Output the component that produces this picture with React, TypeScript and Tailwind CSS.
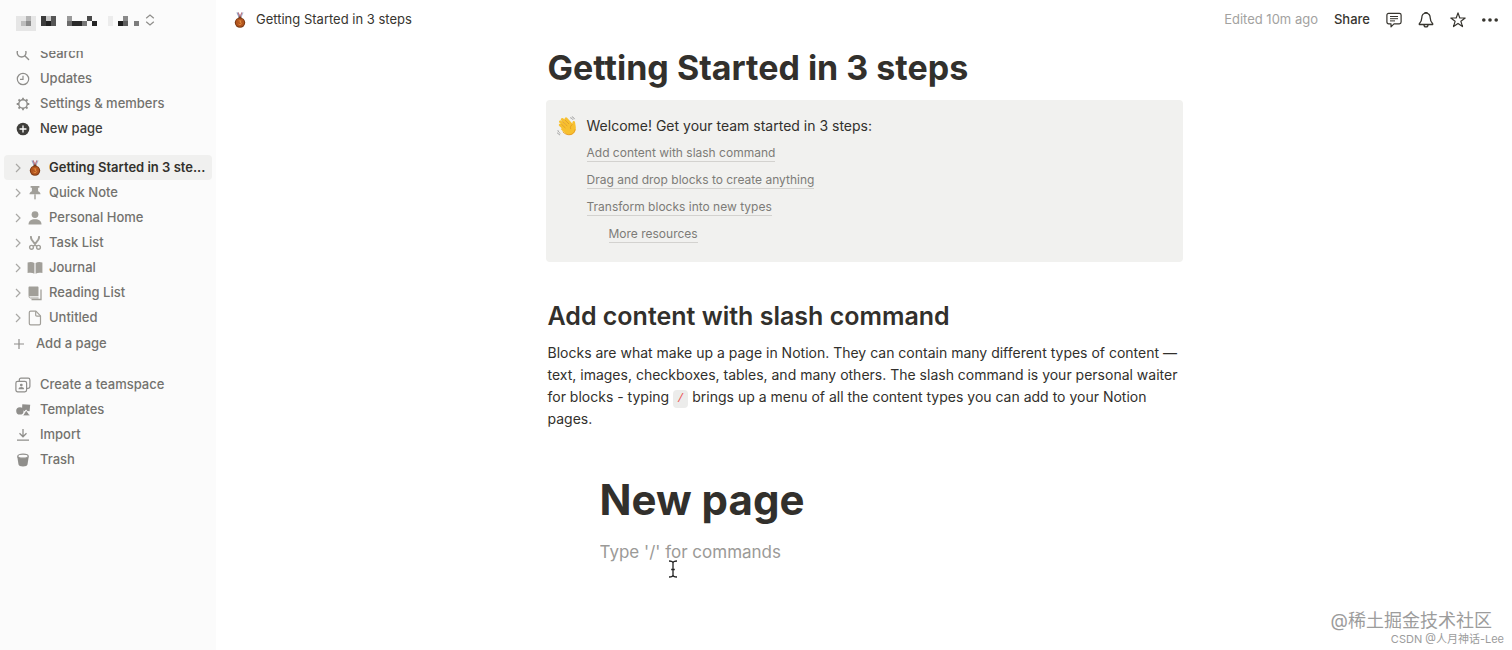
import type { ReactNode } from 'react';

interface NavRowProps {
  icon: ReactNode;
  label: string;
  strong?: boolean;
}

interface PageRowProps {
  icon: ReactNode;
  label: string;
  active?: boolean;
}

function Medal() {
  return (
    <svg className="w-4 h-4 shrink-0" viewBox="0 0 16 16" aria-hidden="true">
      <path d="M4.4 0.6h2.3l1.8 4.6-1.5 1.2z" fill="#8fa3c4" />
      <path d="M11.6 0.6H9.3L7.5 5.2l1.5 1.2z" fill="#a9b7d2" />
      <path d="M5.7 0.6h1l2 5-.9.6zM10.3 0.6h-1L7.4 5.6l.8.6z" fill="#c9707a" />
      <rect x="6.6" y="4.6" width="2.8" height="1.6" rx="0.5" fill="#6e3a1c" />
      <circle cx="8" cy="10.6" r="5.200" fill="#7d3a14" />
      <circle cx="8" cy="10.6" r="4.100" fill="#b3561f" />
      <path d="M6.6 8.9h2.6L7.9 10.2c1.9-.1 1.9 2.5 0 2.4-.6 0-1-.2-1.4-.6" fill="none" stroke="#e8913f" strokeWidth="0.9" />
    </svg>
  );
}

function WavingHand() {
  return (
    <svg className="w-5 h-5 shrink-0" viewBox="0 0 20 20" aria-hidden="true">
      <g fill="none" stroke="#f7c02f" strokeWidth="2.8" strokeLinecap="round">
        <path d="M3.2 9l5.500 5" />
        <path d="M3.400 5.800l7 6.200" />
        <path d="M5.200 3.400l7 6.200" />
        <path d="M9 2.800l5 5.500" />
      </g>
      <path d="M6.5 11l6.700-5.200 1.900 2.600c.3-1.300.2-2.600 1-3.200.9-.5 1.900.2 2 1.300.2 2.200 1.100 4.600.6 7-.5 2.700-2.400 5-5.100 5.400-2.700.4-4.900-.8-6.600-2.600L3.600 13z" fill="#f7c02f" />
      <path d="M4.600 8.500l3.600 3.300M5.600 5.700l4.400 4M7.800 3.800l4 4M15.200 8.600c-1.700 1-2.200 2.500-1.600 4.100" fill="none" stroke="#dd9220" strokeWidth="0.7" strokeLinecap="round" />
      <path d="M6 16c1.900 2.100 4.400 3 7.100 2.700 2.700-.4 4.600-2.300 5-5" fill="none" stroke="#e59a22" strokeWidth="0.9" strokeLinecap="round" />
      <path d="M13.600 1.800c1 .2 1.700.8 2.200 1.700M15.300.8c1 .4 1.700 1.100 2.100 2M1 14.600c.3 1.200 1 2 2 2.500M.5 16.900c.5 1 1.200 1.600 2.200 1.900" fill="none" stroke="#8b8b8b" strokeWidth="0.8" strokeLinecap="round" />
    </svg>
  );
}

function SearchIcon() {
  return (
    <svg className="w-4 h-4" viewBox="0 0 16 16" fill="none" stroke="currentColor" strokeWidth="1.4" strokeLinecap="round">
      <circle cx="6.600" cy="6.600" r="4.400" />
      <path d="M10 10l3.600 3.600" />
    </svg>
  );
}

function ClockIcon() {
  return (
    <svg className="w-4 h-4" viewBox="0 0 16 16" fill="none" stroke="currentColor" strokeWidth="1.2">
      <circle cx="8" cy="8" r="5.700" />
      <path d="M8 4.800V8.400H5" />
    </svg>
  );
}

function GearIcon() {
  return (
    <svg className="w-4 h-4" viewBox="0 0 16 16" fill="none" stroke="currentColor">
      <circle cx="8" cy="8" r="4.200" strokeWidth="1.400" />
      <path
        strokeWidth="1.800"
        d="M8 4V1.700M8 12v2.300M4 8H1.700M12 8h2.300M5.200 5.200L3.500 3.500M10.800 10.800l1.700 1.700M5.200 10.800l-1.700 1.700M10.800 5.200l1.700-1.700"
      />
    </svg>
  );
}

function PlusCircleIcon() {
  return (
    <svg className="w-4 h-4" viewBox="0 0 16 16">
      <circle cx="8" cy="8" r="6.300" fill="currentColor" />
      <path d="M8 5v6M5 8h6" stroke="#fff" strokeWidth="1.300" strokeLinecap="round" />
    </svg>
  );
}

function PinIcon() {
  return (
    <svg className="w-4 h-4" viewBox="0 0 16 16" fill="currentColor">
      <path d="M3.600 1h8.800v1.800h-1.300v3.500c1.500.7 2.400 1.700 2.400 3H2.500c0-1.300.9-2.300 2.400-3V2.800H3.600z" />
      <path d="M7.300 9.200h1.400v4L8 15.300l-.7-2.100z" />
    </svg>
  );
}

function PersonIcon() {
  return (
    <svg className="w-4 h-4" viewBox="0 0 16 16" fill="currentColor">
      <circle cx="8" cy="4.600" r="3.400" />
      <path d="M1.500 14.500c0-3.500 2.600-5.300 6.500-5.300s6.500 1.800 6.500 5.300z" />
    </svg>
  );
}

function ScissorsIcon() {
  return (
    <svg className="w-4 h-4" viewBox="0 0 16 16" fill="none" stroke="currentColor">
      <path d="M4 1.200c-.2 1.300 0 2.300.6 3.300l4.800 6.500M12 1.200c.2 1.300 0 2.300-.6 3.300L6.600 11" strokeWidth="2" />
      <circle cx="4.500" cy="12.300" r="1.900" strokeWidth="1.400" />
      <circle cx="11.500" cy="12.300" r="1.900" strokeWidth="1.400" />
    </svg>
  );
}

function OpenBookIcon() {
  return (
    <svg className="w-4 h-4" viewBox="0 0 16 16" fill="currentColor">
      <path d="M.6 2.600c2.500-.8 4.900-.7 6.800.5v10.600c-1.900-1.200-4.300-1.300-6.800-.7zM8.600 3.100c1.900-1.200 4.300-1.300 6.800-.5v10.400c-2.500-.6-4.900-.5-6.800.7z" />
    </svg>
  );
}

function BooksIcon() {
  return (
    <svg className="w-4 h-4" viewBox="0 0 16 16">
      <path d="M2.600 1.500h7.900c.6 0 1 .4 1 1v8.700h-9c-.6 0-1-.3-1-.8V2.600c0-.6.400-1.100 1.100-1.100z" fill="currentColor" />
      <path d="M2 11.200c0 1.300.6 1.800 1.600 1.800h8" stroke="currentColor" strokeWidth="1" fill="none" />
      <path d="M14 4.500v10H4.500" stroke="currentColor" strokeWidth="1.300" fill="none" />
    </svg>
  );
}

function FileIcon() {
  return (
    <svg className="w-4 h-4" viewBox="0 0 16 16" fill="none" stroke="currentColor" strokeWidth="1.200" strokeLinejoin="round">
      <path d="M3.600 1.200h5.300l4.600 4.700v7.600c0 .8-.5 1.300-1.300 1.300H3.600c-.8 0-1.300-.5-1.300-1.300v-11c0-.8.5-1.300 1.300-1.300z" />
      <path d="M8.700 1.300v3.700c0 .8.400 1.200 1.200 1.200h3.500" />
    </svg>
  );
}

function TeamspaceIcon() {
  return (
    <svg className="w-4 h-4" viewBox="0 0 16 16" fill="none" stroke="currentColor" strokeWidth="1.200">
      <path d="M4.300 4.300V2.900c0-1 .6-1.700 1.700-1.700h7.200c1 0 1.700.6 1.700 1.700v6.700c0 1-.6 1.700-1.700 1.700h-1.300" />
      <rect x="0.900" y="4.400" width="10.700" height="10.400" rx="1.700" />
      <circle cx="6.300" cy="8.100" r="1.400" fill="currentColor" stroke="none" />
      <path d="M3.500 12.300c0-1.500 1.100-2.200 2.800-2.200s2.800.7 2.800 2.200z" fill="currentColor" stroke="none" />
    </svg>
  );
}

function TemplatesIcon() {
  return (
    <svg className="w-4 h-4" viewBox="0 0 16 16" fill="currentColor">
      <circle cx="4.900" cy="8.900" r="3.700" />
      <path d="M7.300 2.200l7.900.5-.6 6.600-2.200-.2-1.300-1.700L9.500 9.200 7 7.600z" />
      <path d="M11.200 8.200l3.900 5.600H7.700z" stroke="#fbfbfb" strokeWidth="0.700" />
    </svg>
  );
}

function ImportIcon() {
  return (
    <svg className="w-4 h-4" viewBox="0 0 16 16" fill="none" stroke="currentColor" strokeWidth="1.300">
      <path d="M8 2v7.500M4.500 6.300L8 9.800l3.500-3.500M2 13.200h12" />
    </svg>
  );
}

function TrashIcon() {
  return (
    <svg className="w-4 h-4" viewBox="0 0 16 16">
      <path d="M2.200 4.200h11.600l-1.300 8.300c-.2 1.200-2 1.900-4.500 1.900s-4.300-.7-4.500-1.900z" fill="currentColor" />
      <ellipse cx="8" cy="4.200" rx="5.200" ry="2" fill="#fbfbfb" stroke="currentColor" strokeWidth="1.200" />
    </svg>
  );
}

function Chevron() {
  return (
    <svg className="w-3 h-3" viewBox="0 0 12 12" fill="none" stroke="currentColor" strokeWidth="1.200">
      <path d="M4 2l4 4-4 4" />
    </svg>
  );
}

// [x, y, width, height, fill] cells of the masked workspace name
const MASK: [number, number, number, number, string][] = [
  [0, 0, 20, 15, '#e6e6e6'],
  [10, 0, 5, 5, '#b5b5b5'],
  [5, 5, 5, 5, '#bdbdbd'],
  [10, 5, 5, 5, '#8c8c8c'],
  [25, 0, 5, 10, '#3c3c3c'],
  [30, 5, 5, 5, '#222222'],
  [30, 0, 5, 5, '#c9c9c9'],
  [35, 0, 5, 10, '#565656'],
  [51, 0, 5, 5, '#9a9a9a'],
  [51, 5, 5, 5, '#6b6b6b'],
  [56, 5, 10, 5, '#2a2a2a'],
  [66, 5, 5, 5, '#777777'],
  [71, 0, 5, 5, '#4a4a4a'],
  [76, 5, 5, 5, '#262626'],
  [92, 0, 5, 10, '#ececec'],
  [102, 5, 5, 5, '#1f1f1f'],
  [107, 0, 5, 5, '#8a8a8a'],
  [107, 5, 5, 5, '#5f5f5f'],
  [118, 5, 5, 5, '#7d7d7d'],
];

function WorkspaceSwitcher() {
  return (
    <button type="button" aria-label="Switch workspace" className="flex items-center gap-1 h-10 pl-4 text-[#8f8e8b]">
      <svg className="w-[124px] h-[15px] mt-[6px]" viewBox="0 0 124 15" shapeRendering="crispEdges">
        {MASK.map(([x, y, w, h, fill], i) => (
          <rect key={i} x={x} y={y} width={w} height={h} fill={fill} />
        ))}
      </svg>
      <svg className="w-3 h-3" viewBox="0 0 12 12" fill="none" stroke="currentColor" strokeWidth="1.200">
        <path d="M2.200 4.300L6 1l3.800 3.300M2.200 7.700L6 11l3.800-3.300" />
      </svg>
    </button>
  );
}

function NavRow({ icon, label, strong }: NavRowProps) {
  return (
    <a
      href="#"
      className={`flex items-center gap-[9px] h-[25px] pl-[15px] font-medium ${strong ? 'text-[#3f3e3b]' : 'text-[#73726e]'}`}
    >
      <span className={strong ? 'text-[#3f3e3b]' : 'text-[#8f8e8b]'}>{icon}</span>
      {label}
    </a>
  );
}

function PageRow({ icon, label, active }: PageRowProps) {
  return (
    <li className={`flex items-center h-[25px] mx-1 pl-2 rounded-sm ${active ? 'bg-[#f0f0ef]' : ''}`}>
      <button type="button" aria-label={`Expand ${label}`} className="text-[#a9a8a5] mr-[3px]">
        <Chevron />
      </button>
      <a
        href="#"
        className={`flex items-center gap-[6px] whitespace-nowrap ${active ? 'font-semibold text-[#32302c]' : 'font-medium text-[#73726e]'}`}
      >
        <span className="text-[#a19f99]">{icon}</span>
        {label}
      </a>
    </li>
  );
}

function Sidebar() {
  return (
    <aside className="w-[216px] shrink-0 bg-[#fbfbfb] text-[13px]">
      <WorkspaceSwitcher />
      <nav className="mt-[11px] overflow-hidden">
        <div className="-mt-[10px]">
          <NavRow icon={<SearchIcon />} label="Search" />
          <NavRow icon={<ClockIcon />} label="Updates" />
          <NavRow icon={<GearIcon />} label="Settings & members" />
          <NavRow icon={<PlusCircleIcon />} label="New page" strong />
        </div>
        <ul className="mt-[14px]">
          <PageRow icon={<Medal />} label="Getting Started in 3 ste..." active />
          <PageRow icon={<PinIcon />} label="Quick Note" />
          <PageRow icon={<PersonIcon />} label="Personal Home" />
          <PageRow icon={<ScissorsIcon />} label="Task List" />
          <PageRow icon={<OpenBookIcon />} label="Journal" />
          <PageRow icon={<BooksIcon />} label="Reading List" />
          <PageRow icon={<FileIcon />} label="Untitled" />
        </ul>
        <button type="button" className="flex items-center gap-[11px] h-7 pl-[13px] font-medium text-[#73726e]">
          <svg className="w-3 h-3 text-[#8f8e8b]" viewBox="0 0 12 12" stroke="currentColor" strokeWidth="1.200">
            <path d="M6 1v10M1 6h10" />
          </svg>
          Add a page
        </button>
        <div className="mt-[14px]">
          <NavRow icon={<TeamspaceIcon />} label="Create a teamspace" />
          <NavRow icon={<TemplatesIcon />} label="Templates" />
          <NavRow icon={<ImportIcon />} label="Import" />
          <NavRow icon={<TrashIcon />} label="Trash" />
        </div>
      </nav>
    </aside>
  );
}

function TopBar() {
  return (
    <header className="flex items-center justify-between h-10 pl-4 pr-[14px] text-[13px] text-[#37352f]">
      <a href="#" className="flex items-center gap-2">
        <Medal />
        Getting Started in 3 steps
      </a>
      <div className="flex items-center gap-4">
        <span className="text-[#a3a29f]">Edited 10m ago</span>
        <button type="button" className="font-medium">Share</button>
        <button type="button" aria-label="Comments">
          <svg className="w-4 h-4" viewBox="0 0 16 16" fill="none" stroke="currentColor" strokeWidth="1.200" strokeLinejoin="round">
            <path d="M2.600 1.400h10.800c1 0 1.700.7 1.700 1.700v7c0 1-.7 1.700-1.700 1.700H8l-3 3v-3H2.600c-1 0-1.700-.7-1.700-1.700v-7c0-1 .7-1.700 1.700-1.700z" />
            <path d="M4 4.500h8M4 6.700h8M4 8.900h5" strokeWidth="1" />
          </svg>
        </button>
        <button type="button" aria-label="Notifications">
          <svg className="w-4 h-4" viewBox="0 0 16 16" fill="none" stroke="currentColor" strokeWidth="1.300" strokeLinejoin="round">
            <path d="M8 1.200c-2.800 0-4.200 2-4.200 4.600 0 3-.9 4.300-2.500 6v.7h13.400v-.7c-1.600-1.700-2.500-3-2.500-6 0-2.600-1.400-4.600-4.200-4.600z" />
            <path d="M6 12.700c0 1.500.9 2.200 2 2.200s2-.7 2-2.200M7 1.200V.600h2v.6" />
          </svg>
        </button>
        <button type="button" aria-label="Favorite">
          <svg className="w-4 h-4" viewBox="0 0 16 16" fill="none" stroke="currentColor" strokeWidth="1.200" strokeLinejoin="round">
            <path d="M8 .9l1.800 5.100h5.400l-4.300 3.300 1.600 5.300L8 11.400l-4.500 3.200 1.600-5.300L.8 6h5.400z" />
          </svg>
        </button>
        <button type="button" aria-label="More">
          <svg className="w-4 h-4" viewBox="0 0 16 16" fill="currentColor">
            <circle cx="1.800" cy="8" r="1.800" />
            <circle cx="8" cy="8" r="1.800" />
            <circle cx="14.200" cy="8" r="1.800" />
          </svg>
        </button>
      </div>
    </header>
  );
}

function TocLink({ children }: { children: string }) {
  return (
    <a href="#" className="border-b border-[#d3d2cf] leading-4 text-[12px] text-[#7d7c78]">
      {children}
    </a>
  );
}

export default function App() {
  return (
    <div className="relative flex min-h-screen overflow-hidden bg-white font-['Inter','Noto_Sans_CJK_SC',sans-serif] text-[#32302c]">
      <Sidebar />

      <main className="flex-1 min-w-0">
        <TopBar />

        <article className="max-w-[637px] mx-auto">
          <h1 className="mt-1 px-[2px] text-[34px] leading-[48px] font-bold whitespace-nowrap">Getting Started in 3 steps</h1>

          <section className="flex gap-[10px] mt-2 py-[14px] pl-[11px] bg-[#f1f1ef] rounded-sm">
            <span className="mt-[2px]">
              <WavingHand />
            </span>
            <div>
              <p className="text-[14px] leading-6">Welcome! Get your team started in 3 steps:</p>
              <ul className="flex flex-col mt-[2px]">
                <li className="flex items-center h-[27px]"><TocLink>Add content with slash command</TocLink></li>
                <li className="flex items-center h-[27px]"><TocLink>Drag and drop blocks to create anything</TocLink></li>
                <li className="flex items-center h-[27px]"><TocLink>Transform blocks into new types</TocLink></li>
                <li className="flex items-center h-[27px] pl-[22px]"><TocLink>More resources</TocLink></li>
              </ul>
            </div>
          </section>

          <h2 className="mt-9 px-[2px] text-[25px] leading-9 font-semibold whitespace-nowrap">Add content with slash command</h2>
          <p className="mt-2 px-[2px] text-[14px] leading-[22px]">
            Blocks are what make up a page in Notion. They can contain many different types of content — text, images,
            checkboxes, tables, and many others. The slash command is your personal waiter for blocks - typing{' '}
            <code className="px-1 py-[2px] rounded-sm bg-[#ececeb] font-['Liberation_Mono',monospace] leading-none text-[12px] text-[#eb5757]">/</code>{' '}
            brings up a menu of all the content types you can add to your Notion pages.
          </p>

          <div className="relative mt-10 pl-[54px]">
            <h2 className="text-[42px] leading-[60px] font-bold whitespace-nowrap">New page</h2>
            <input
              type="text"
              aria-label="Page content"
              placeholder="Type '/' for commands"
              className="block w-full mt-[6px] h-8 text-[17px] outline-none placeholder:text-[#9b9a97]"
            />
            <svg className="absolute left-[122px] top-[90px] w-[10px] h-[18px]" viewBox="0 0 10 18" fill="none" stroke="#222" strokeWidth="1.300" aria-hidden="true">
              <path d="M1 1c2.500 0 4 .6 4 2v12c0 1.400-1.500 2-4 2M9 1c-2.500 0-4 .6-4 2v12c0 1.400 1.500 2 4 2M3.200 9.500h3.600" />
            </svg>
          </div>
        </article>
      </main>

      <div className="absolute right-2 bottom-[5px] flex flex-col items-end text-[#9c9c9c]">
        <span className="mr-3 text-[18px] leading-6">@稀土掘金技术社区</span>
        <span className="text-[11px] leading-3">CSDN @人月神话-Lee</span>
      </div>
    </div>
  );
}
